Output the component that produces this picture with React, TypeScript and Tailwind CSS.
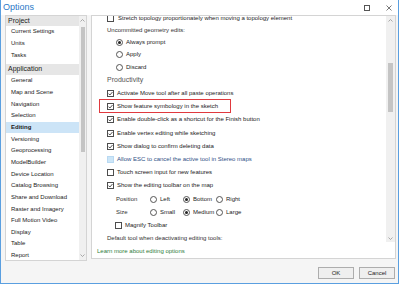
const leftGroups = [
  { title: 'Project', items: ['Current Settings', 'Units', 'Tasks'] },
  {
    title: 'Application',
    items: [
      'General',
      'Map and Scene',
      'Navigation',
      'Selection',
      'Editing',
      'Versioning',
      'Geoprocessing',
      'ModelBuilder',
      'Device Location',
      'Catalog Browsing',
      'Share and Download',
      'Raster and Imagery',
      'Full Motion Video',
      'Display',
      'Table',
      'Report',
    ],
  },
]

const productivity = [
  { label: 'Activate Move tool after all paste operations', checked: true },
  { label: 'Show feature symbology in the sketch', checked: true, marked: true },
  { label: 'Enable double-click as a shortcut for the Finish button', checked: true },
  { label: 'Enable vertex editing while sketching', checked: true },
  { label: 'Show dialog to confirm deleting data', checked: true },
  { label: 'Allow ESC to cancel the active tool in Stereo maps', checked: false, disabled: true },
  { label: 'Touch screen input for new features', checked: false },
  { label: 'Show the editing toolbar on the map', checked: true },
]

function Check({ checked, disabled }: { checked?: boolean; disabled?: boolean }) {
  return (
    <span
      className={
        disabled
          ? 'w-[7px] h-[7px] shrink-0 border border-[#b9d9f2] bg-[#cce6f8]'
          : 'w-[7px] h-[7px] shrink-0 border border-[#4d4d4d] bg-white flex items-center justify-center'
      }
    >
      {checked && (
        <svg width="5" height="5" viewBox="0 0 5 5" fill="none" stroke="#262626" strokeWidth="0.8">
          <path d="M0.5 2.6L1.9 4L4.5 1" />
        </svg>
      )}
    </span>
  )
}

function Radio({ checked }: { checked?: boolean }) {
  return (
    <span className="w-[7px] h-[7px] shrink-0 rounded-full border border-[#555] bg-white flex items-center justify-center">
      {checked && <span className="w-[3px] h-[3px] rounded-full bg-[#222]" />}
    </span>
  )
}

function Arrow({ up }: { up?: boolean }) {
  return (
    <svg width="5" height="3" viewBox="0 0 5 3" fill="none" stroke="#8a8a8a" strokeWidth="0.7">
      <path d={up ? 'M0.5 2.5L2.5 0.5L4.5 2.5' : 'M0.5 0.5L2.5 2.5L4.5 0.5'} />
    </svg>
  )
}

export default function App() {
  return (
    <div className="w-[400px] h-[285px] bg-white overflow-hidden text-[#1b1b1b]" style={{ fontFamily: '"Liberation Sans", Arial, sans-serif' }}>
      <div className="w-[399px] h-[284px] border-l border-r border-b border-[#5a9fe0] bg-[#f5f5f5] flex flex-col">
        {/* title bar */}
        <div className="h-[15px] bg-white flex items-center shrink-0">
          <span className="ml-[2px] text-[9px] leading-none text-[#2b79c8]">Options</span>
          <div className="ml-auto flex items-center gap-[16px] mr-[6px]">
            <span className="w-[6px] h-[6px] border border-[#555]" />
            <svg width="6" height="6" viewBox="0 0 6 6" stroke="#555" strokeWidth="0.8">
              <path d="M0.5 0.5L5.5 5.5M5.5 0.5L0.5 5.5" />
            </svg>
          </div>
        </div>

        <div className="flex gap-[4px] pl-[4px] pr-[2px]">
          {/* left nav */}
          <div className="w-[82px] h-[246px] border border-[#d4d4d4] bg-white flex">
            <div className="flex-1">
              {leftGroups.map((g, gi) => (
                <div key={g.title} className={gi > 0 ? 'mt-[3px]' : ''}>
                  <div className={gi > 0 ? 'h-[11px] bg-[#e6e6e6] pl-[2px] flex items-center text-[7px]' : 'h-[10px] bg-[#e6e6e6] pl-[2px] flex items-center text-[7px]'}>
                    {g.title}
                  </div>
                  {g.items.map((it) => (
                    <div
                      key={it}
                      className={
                        it === 'Editing'
                          ? 'h-[11.67px] pl-[5px] flex items-center text-[6px] bg-[#cce4f7] font-bold'
                          : 'h-[11.67px] pl-[5px] flex items-center text-[6px]'
                      }
                    >
                      {it}
                    </div>
                  ))}
                </div>
              ))}
            </div>
            <div className="w-[7px] bg-[#f0f0f0] flex flex-col items-center">
              <div className="h-[9px] flex items-center">
                <Arrow up />
              </div>
              <div className="w-[4px] h-[125px] mt-[2px] bg-[#c4c4c4]" />
              <div className="mt-auto h-[9px] flex items-center">
                <Arrow />
              </div>
            </div>
          </div>

          {/* right panel */}
          <div className="w-[305px] h-[244px] border border-[#d4d4d4] bg-white flex flex-col">
            <div className="h-[226px] flex overflow-hidden">
              <div className="flex-1 overflow-hidden">
                <div className="-mt-[3px] pl-[15px] text-[6px]">
                  <div className="h-[11px] flex items-center gap-[4px]">
                    <Check />
                    <span>Stretch topology proportionately when moving a topology element</span>
                  </div>
                  <div className="h-[12px] flex items-center text-[#333]">Uncommitted geometry edits:</div>
                  {['Always prompt', 'Apply', 'Discard'].map((r, i) => (
                    <div key={r} className="h-[12.5px] pl-[9px] flex items-center gap-[3px]">
                      <Radio checked={i === 0} />
                      <span>{r}</span>
                    </div>
                  ))}
                  <div className="h-[13.5px] flex items-center text-[7px] text-[#555]">Productivity</div>
                  {productivity.map((p) => (
                    <div key={p.label} className="h-[13.2px] flex items-center gap-[3px] relative">
                      <Check checked={p.checked} disabled={p.disabled} />
                      <span className={p.disabled ? 'text-[#2f4f86]' : ''}>{p.label}</span>
                      {p.marked && (
                        <span className="absolute left-[-8px] top-[-1px] w-[132px] h-[14px] border border-[#e0393e]" />
                      )}
                    </div>
                  ))}
                  {[
                    { label: 'Position', opts: ['Left', 'Bottom', 'Right'] },
                    { label: 'Size', opts: ['Small', 'Medium', 'Large'] },
                  ].map((row) => (
                    <div key={row.label} className="h-[13px] pl-[9px] flex items-center text-[#333]">
                      <span className="w-[34px]">{row.label}</span>
                      {row.opts.map((o, i) => (
                        <div key={o} className="w-[33px] flex items-center gap-[3px] text-[#1b1b1b]">
                          <Radio checked={i === 1} />
                          <span>{o}</span>
                        </div>
                      ))}
                    </div>
                  ))}
                  <div className="h-[13px] pl-[8px] flex items-center gap-[3px]">
                    <Check />
                    <span>Magnify Toolbar</span>
                  </div>
                  <div className="h-[13px] flex items-center text-[#333]">Default tool when deactivating editing tools:</div>
                </div>
              </div>
              <div className="w-[9px] bg-[#f0f0f0] flex flex-col items-center">
                <div className="h-[8px] flex items-center">
                  <Arrow up />
                </div>
                <div className="w-[5px] h-[49px] mt-[39px] bg-[#c4c4c4]" />
                <div className="mt-auto h-[8px] flex items-center">
                  <Arrow />
                </div>
              </div>
            </div>
            <div className="flex-1 pl-[5px] pt-[2px] flex items-center text-[6px] text-[#2e7d3c]">
              Learn more about editing options
            </div>
          </div>
        </div>

        {/* buttons */}
        <div className="mt-auto mb-[4px] flex justify-end gap-[5px] pr-[3px]">
          <button className="w-[36px] h-[12px] border border-[#adadad] bg-[#efefef] text-[6px] leading-none">OK</button>
          <button className="w-[36px] h-[12px] border border-[#adadad] bg-[#efefef] text-[6px] leading-none">Cancel</button>
        </div>
      </div>
    </div>
  )
}
